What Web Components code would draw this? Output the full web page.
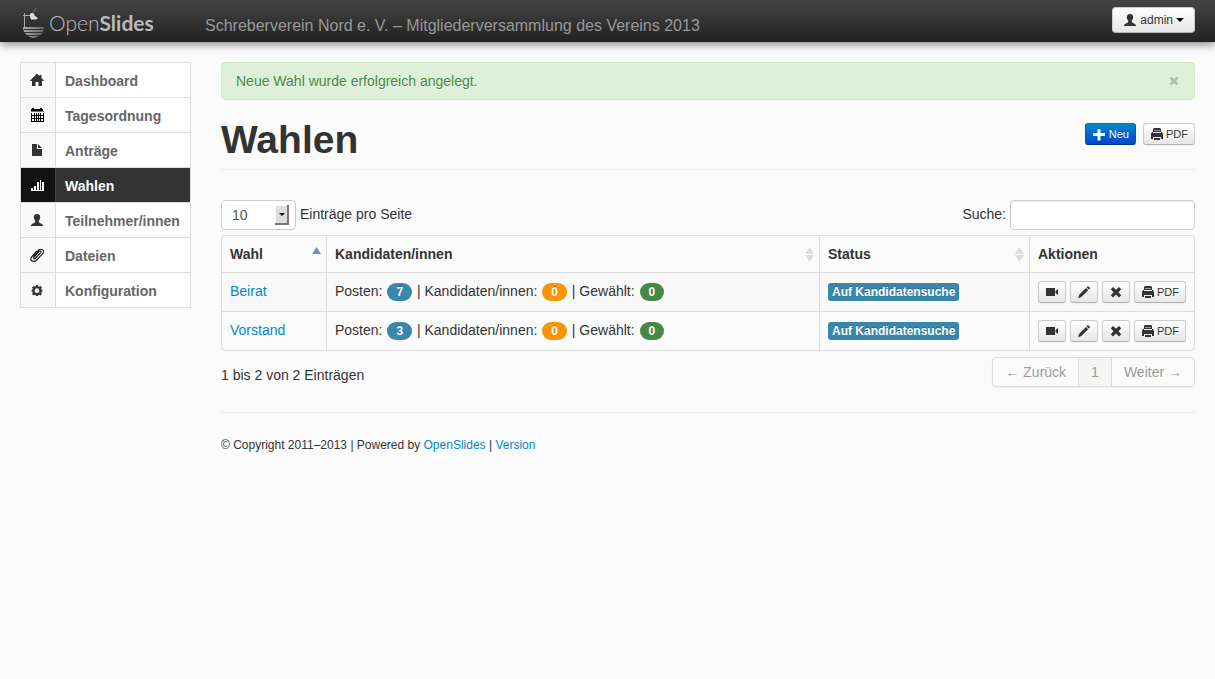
<!DOCTYPE html>
<html lang="de">
<head>
<meta charset="utf-8">
<title>Wahlen – OpenSlides</title>
<style>
  body { margin: 0; background: #fbfbfb; color: #333; font: 14px/20px "Liberation Sans", Arial, sans-serif; }
</style>
</head>
<body>
<os-app>
  <os-topbar slot="top" user="admin">Schreberverein Nord e. V. – Mitgliederversammlung des Vereins 2013</os-topbar>
  <os-nav slot="side"></os-nav>
  <os-alert>Neue Wahl wurde erfolgreich angelegt.</os-alert>
  <os-page-header>
    Wahlen
    <os-button slot="actions" kind="primary" icon="plus">Neu</os-button>
    <os-button slot="actions" icon="print">PDF</os-button>
  </os-page-header>
  <os-election-table></os-election-table>
  <os-footer></os-footer>
</os-app>

<script>
const ICONS = {
  home: '<path d="M7 .5 9.500 3V2H11.500V5L13.800 7.500V8H12V13H8.500V9H5.500V13H2V8H.2V7.500Z"/>',
  calendar: '<path fill="#000" d="M1 1h1V0h2v1h6V0h2v1h1v3H1zM1 5h13v9H1z"/><path fill="#777" d="M1 3h13v1H1z"/><path fill="#f9f9f9" d="M2 5h2v2H2zM5 5h1v2H5zM7 5h1v2H7zM9 5h1v2H9zM11 5h2v2h-2zM2 8h2v2H2zM5 8h1v2H5zM7 8h1v2H7zM9 8h1v2H9zM11 8h2v2h-2zM2 11h2v2H2zM5 11h1v2H5zM7 11h1v2H7zM9 11h1v2H9zM11 11h2v2h-2z"/>',
  file: '<path d="M2 1h5v5h5v7H2zM8 1l4 4H8z"/>',
  stats: '<path d="M1 10h2v2H1zM4 8h2v4H4zM7 4h2v8H7zM10 2h1v10h-1zM12 4h2v8h-2zM1 12h13v1H1z"/>',
  user: '<path d="M7 1C9.200 1 10.300 2.300 10.200 4.300 10.100 6 9.400 7 8.800 7.800V9.300C9.500 10.200 13 10.500 13 13H1C1 10.500 4.500 10.200 5.200 9.300V7.800C4.600 7 3.900 6 3.800 4.300 3.700 2.300 4.800 1 7 1Z"/>',
  clip: '<path fill="none" stroke="#222" stroke-width="1.200" stroke-linecap="round" d="M3.500 8 8.300 2.300C10 .4 14.800 1.300 13.300 4.800L6.800 12C4.300 14.500-.5 13.300 1.200 9.500L6.500 3.300M5.300 10.500 10.600 4.600C11.600 3.300 10 2.400 9 3.400L3.900 9.400C2.900 10.800 4.400 11.500 5.300 10.500"/>',
  cog: '<path fill-rule="evenodd" d="M6 2h2l.3 1.400.9.400L10.500 3 12 4.500l-.8 1.300.4.900L12.500 7v1.500l-.9.300-.4.900.8 1.300-1.500 1.500-1.300-.8-.9.300L8 13H6l-.3-1-.9-.3-1.300.8L2 11l.8-1.300-.4-.9L1.500 8.500V7l.9-.3.400-.9L2 4.500 3.500 3l1.300.8.900-.4ZM7 5.300A2.400 2.400 0 1 0 7 10.100 2.400 2.400 0 1 0 7 5.300Z"/>',
  plus: '<path d="M5.500 2h3v4H13v3H8.500v4.500h-3V9H1V6h4.500z"/>',
  print: '<path d="M4 1h6l1 1v3H3V2zM2 5h1v1h8V5h1l1 2v5h-2v-2H3v2H1V7zM4 11h6v2H4z"/><path fill="#fff" opacity=".5" d="M4 3h6v1H4z"/>',
  video: '<path d="M1 3h9v8H1zM10.500 6 13 4v6l-2.500-2z"/>',
  pencil: '<path d="M11 1 13.200 3.200 11.800 4.600 9.500 2.400ZM9 3 11.200 5.200 4.300 12 1 13.200 2.200 9.800Z"/>',
  remove: '<path d="M4 2 7 4.800 10 2 12.200 4.200 9.500 7.200 12.200 10.200 10 12.400 7 9.600 4 12.400 1.800 10.200 4.500 7.200 1.800 4.200Z"/>'
};
const icon = name => `<svg class="icon" viewBox="0 0 14 14" width="14" height="14" fill="currentColor" aria-hidden="true">${ICONS[name]}</svg>`;

class Base extends HTMLElement {
  connectedCallback() {
    if (this.shadowRoot) return;
    this.attachShadow({ mode: 'open' }).innerHTML =
      `<style>*{box-sizing:border-box} :host{display:block} .icon{display:block;flex:none}
       a{color:#08c;text-decoration:none} a:hover{text-decoration:underline}
       button,input,select{font:inherit;margin:0}</style>` + this.render();
  }
}

customElements.define('os-app', class extends Base {
  render() {
    return `<style>
      .layout{display:grid;grid-template-columns:171px minmax(0,1fr);column-gap:30px;align-items:start;padding:20px}
    </style>
    <slot name="top"></slot>
    <div class="layout"><slot name="side"></slot><main><slot></slot></main></div>`;
  }
});

customElements.define('os-topbar', class extends Base {
  render() {
    return `<style>
      header{display:flex;align-items:center;height:42px;padding:0 20px 2px;color:#999;
        background:linear-gradient(#444,#222);box-shadow:0 1px 10px rgba(0,0,0,.6)}
      .brand{display:flex;align-items:center;width:185px;color:#bbb;font:300 21px/30px Lato,sans-serif;gap:4px;padding:6px 0 0 2px}
      .brand:hover{text-decoration:none}
      .brand b{font-weight:700}
      .brand svg{display:block;flex:none}
      .title{flex:1;font-size:16px;line-height:20px;padding-top:12px}
      button{display:flex;align-items:center;gap:3px;height:26px;padding:0 10px;border:1px solid #ccc;border-bottom-color:#b3b3b3;border-radius:4px;
        font-size:12px;color:#333;background:linear-gradient(#fff,#e6e6e6)}
      .caret{border:4px solid transparent;border-top-color:#000;border-bottom:0}
    </style>
    <header>
      <a class="brand" href="#" aria-label="OpenSlides">
        <svg width="23" height="30" viewBox="0 0 23 30" aria-hidden="true">
          <defs><linearGradient id="hull"><stop stop-color="#aaa"/><stop offset="1" stop-color="#666"/></linearGradient></defs>
          <path fill="none" stroke="#aaa" d="M2.500 5v14M1 7.500h8"/><path fill="none" d="M10.500 5 14.500 0" stroke="#777"/>
          <path d="M8 6q2-2 4 0l1 2 3 2-2 1.500H9L8 9z" fill="#ddd"/>
          <path d="M1 19h21q0 5-4 8-3 3-6.500 3T5 27Q1 24 1 19" fill="url(#hull)"/>
          <path fill="none" stroke="#333" d="M2 21.500h19M2 24.500h18M4 27.500h14"/>
        </svg>
        <span>Open<b>Slides</b></span>
      </a>
      <span class="title"><slot></slot></span>
      <button type="button">${icon('user')}<span>${this.getAttribute('user')}</span><i class="caret"></i></button>
    </header>`;
  }
});

customElements.define('os-nav', class extends Base {
  render() {
    const items = [['home','Dashboard'],['calendar','Tagesordnung'],['file','Anträge'],['stats','Wahlen'],['user','Teilnehmer/innen'],['clip','Dateien'],['cog','Konfiguration']];
    return `<style>
      ul{list-style:none;margin:0;padding:0;border:1px solid #ddd;background:#fff}
      li+li{border-top:1px solid #ddd}
      a{display:flex;height:34px;color:#666;font-weight:bold}
      a:hover{text-decoration:none}
      .cell{display:flex;align-items:center;width:35px;padding-left:9px;background:#f9f9f9;color:#333;border-right:1px solid #ddd}
      .name{padding:8px 0 0 9px;line-height:20px}
      .active{background:#333;color:#fff}
      .active .cell{background:#111;color:#fff;border-color:#444}
    </style><nav><ul>${items.map(([i, t]) =>
      `<li><a href="#"${t === 'Wahlen' ? ' class="active" aria-current="page"' : ''}><span class="cell">${icon(i)}</span><span class="name">${t}</span></a></li>`).join('')}</ul></nav>`;
  }
});

customElements.define('os-alert', class extends Base {
  render() {
    return `<style>
      div{display:flex;justify-content:space-between;padding:8px 14px;border:1px solid #d6e9c6;border-radius:4px;background:#dff0d8;color:#468847;text-shadow:0 1px 0 rgba(255,255,255,.5)}
      button{padding:0;width:12px;border:0;background:none;color:#000;opacity:.2;display:flex;align-items:center;justify-content:center}
    </style><div role="alert"><span><slot></slot></span>
      <button type="button" aria-label="Schließen"><svg width="10" height="10" viewBox="0 0 10 10" aria-hidden="true"><path d="m1.500 1.500 7 7m0-7-7 7" stroke="currentColor" stroke-width="2.600"/></svg></button></div>`;
  }
});

customElements.define('os-page-header', class extends Base {
  render() {
    return `<style>
      header{display:flex;justify-content:space-between;margin:20px 0 30px;padding-bottom:9px;border-bottom:1px solid #eee}
      h1{margin:0;font-size:39px;line-height:40px}
      .actions{display:flex;gap:7px;padding-top:3px}
    </style><header><h1><slot></slot></h1><div class="actions"><slot name="actions"></slot></div></header>`;
  }
});

customElements.define('os-button', class extends Base {
  render() {
    const label = this.getAttribute('label');
    return `<style>
      :host{display:block;height:22px}
      button{display:flex;align-items:center;gap:2px;height:22px;padding:0 6px;border:1px solid #ccc;border-bottom-color:#b3b3b3;border-radius:3px;
        font-size:11px;line-height:20px;color:#333;background:linear-gradient(#fff,#e6e6e6);box-shadow:0 1px 2px rgba(0,0,0,.05);text-shadow:0 1px 1px rgba(255,255,255,.75)}
      .primary{gap:3px;color:#fff;border-color:#0074cc #05c #003580;background:linear-gradient(#08c,#04c);text-shadow:0 -1px 0 rgba(0,0,0,.25)}
    </style><button type="button" class="${this.getAttribute('kind') || ''}"${label ? ` aria-label="${label}"` : ''}>${icon(this.getAttribute('icon'))}${label ? '' : '<span><slot></slot></span>'}</button>`;
  }
});

customElements.define('os-badge', class extends Base {
  render() {
    return `<style>
      :host{display:inline-block;margin:0 1px;padding:2px 9px;border-radius:9px;background:#3a87ad;color:#fff;font-size:12px;line-height:14px;font-weight:bold;text-shadow:0 -1px 0 rgba(0,0,0,.25)}
      :host([kind=warning]){background:#f89406}
      :host([kind=success]){background:#468847}
      :host([kind=label]){margin:0;padding:2px 4px;border-radius:3px}
    </style><slot></slot>`;
  }
});

customElements.define('os-election-table', class extends Base {
  render() {
    const sort = '<svg width="9" height="15" viewBox="0 0 9 15" fill="#ddd" aria-hidden="true"><path d="M4.500 0 9 7H0zM0 8h9l-4.500 7z"/></svg>';
    const asc = '<svg width="9" height="15" viewBox="0 0 9 15" fill="#7b80dd" aria-hidden="true"><path d="M4.500 0 9 7H0z"/></svg>';
    const row = ([name, posts]) => `<tr><td><a href="#">${name}</a></td>
      <td>Posten: <os-badge>${posts}</os-badge> | Kandidaten/innen: <os-badge kind="warning">0</os-badge> | Gewählt: <os-badge kind="success">0</os-badge></td>
      <td><os-badge kind="label">Auf Kandidatensuche</os-badge></td>
      <td><div class="tools"><os-button icon="video" label="Projizieren"></os-button><os-button icon="pencil" label="Bearbeiten"></os-button><os-button icon="remove" label="Löschen"></os-button><os-button icon="print">PDF</os-button></div></td></tr>`;
    return `<style>
      .bar{display:flex;justify-content:space-between;margin-bottom:5px}
      .bar>div{display:flex;align-items:center;gap:4px}
      .bar label{height:22px}
      .pick{position:relative}
      select,input{display:block;height:30px;border:1px solid #ccc;border-radius:4px;background:#fff;color:#555}
      select{appearance:none;width:75px;padding:0 10px}
      input{width:185px;padding:4px 6px;box-shadow:inset 0 1px 1px rgba(0,0,0,.075)}
      .pick svg{position:absolute;right:7px;top:5px;pointer-events:none}
      table{width:100%;table-layout:fixed;border:1px solid #ddd;border-left:0;border-collapse:separate;border-spacing:0;border-radius:4px}
      th,td{padding:8px;text-align:left;vertical-align:top;border-left:1px solid #ddd;white-space:nowrap}
      td{border-top:1px solid #ddd;height:39px;padding-bottom:0}
      th:first-child{border-top-left-radius:4px}
      tr:last-child td:first-child{border-bottom-left-radius:4px}
      tbody tr:first-child td{background:#f9f9f9}
      .c1{width:105px}.c3{width:210px}.c4{width:165px}
      .head{display:flex;justify-content:space-between;align-items:center;margin-right:-3px}
      .tools{display:flex;gap:4px}
      .foot{display:flex;justify-content:space-between;align-items:flex-start;padding:6px 0 25px}
      .foot p{margin:0;padding-top:8px}
      ul{display:flex;list-style:none;margin:0;padding:0;border:1px solid #ddd;border-radius:4px;box-shadow:0 1px 2px rgba(0,0,0,.05)}
      li+li{border-left:1px solid #ddd}
      li a{display:block;padding:4px 12px;color:#999}
      li .on{background:#f5f5f5}
    </style>
    <div class="bar">
      <div><span class="pick"><select id="len"><option>10</option><option>25</option><option>50</option></select>
        <svg width="14" height="20" viewBox="0 0 14 20" aria-hidden="true"><path fill="#ddd" d="M0 0h14v20H0z"/><path fill="none" stroke="#fff" d="M.5 20V.5H14"/><path fill="none" stroke="#777" stroke-width="2" d="M13 0v19H0"/><path d="M4 8h6l-3 3z"/></svg></span>
        <label for="len">Einträge pro Seite</label></div>
      <div><label for="q">Suche:</label><input id="q" type="text"></div>
    </div>
    <table>
      <colgroup><col class="c1"><col><col class="c3"><col class="c4"></colgroup>
      <thead><tr><th aria-sort="ascending"><div class="head">Wahl ${asc}</div></th><th><div class="head">Kandidaten/innen ${sort}</div></th><th><div class="head">Status ${sort}</div></th><th>Aktionen</th></tr></thead>
      <tbody>${[['Beirat', 7], ['Vorstand', 3]].map(row).join('')}</tbody>
    </table>
    <div class="foot"><p>1 bis 2 von 2 Einträgen</p>
      <ul><li><a href="#">← Zurück</a></li><li><a href="#" class="on">1</a></li><li><a href="#">Weiter →</a></li></ul></div>`;
  }
});

customElements.define('os-footer', class extends Base {
  render() {
    return `<style>
      footer{border-top:1px solid #eee;padding-top:22px;font-size:12px}
    </style><footer>© Copyright 2011–2013 | Powered by <a href="#">OpenSlides</a> | <a href="#">Version</a></footer>`;
  }
});
</script>
</body>
</html>
